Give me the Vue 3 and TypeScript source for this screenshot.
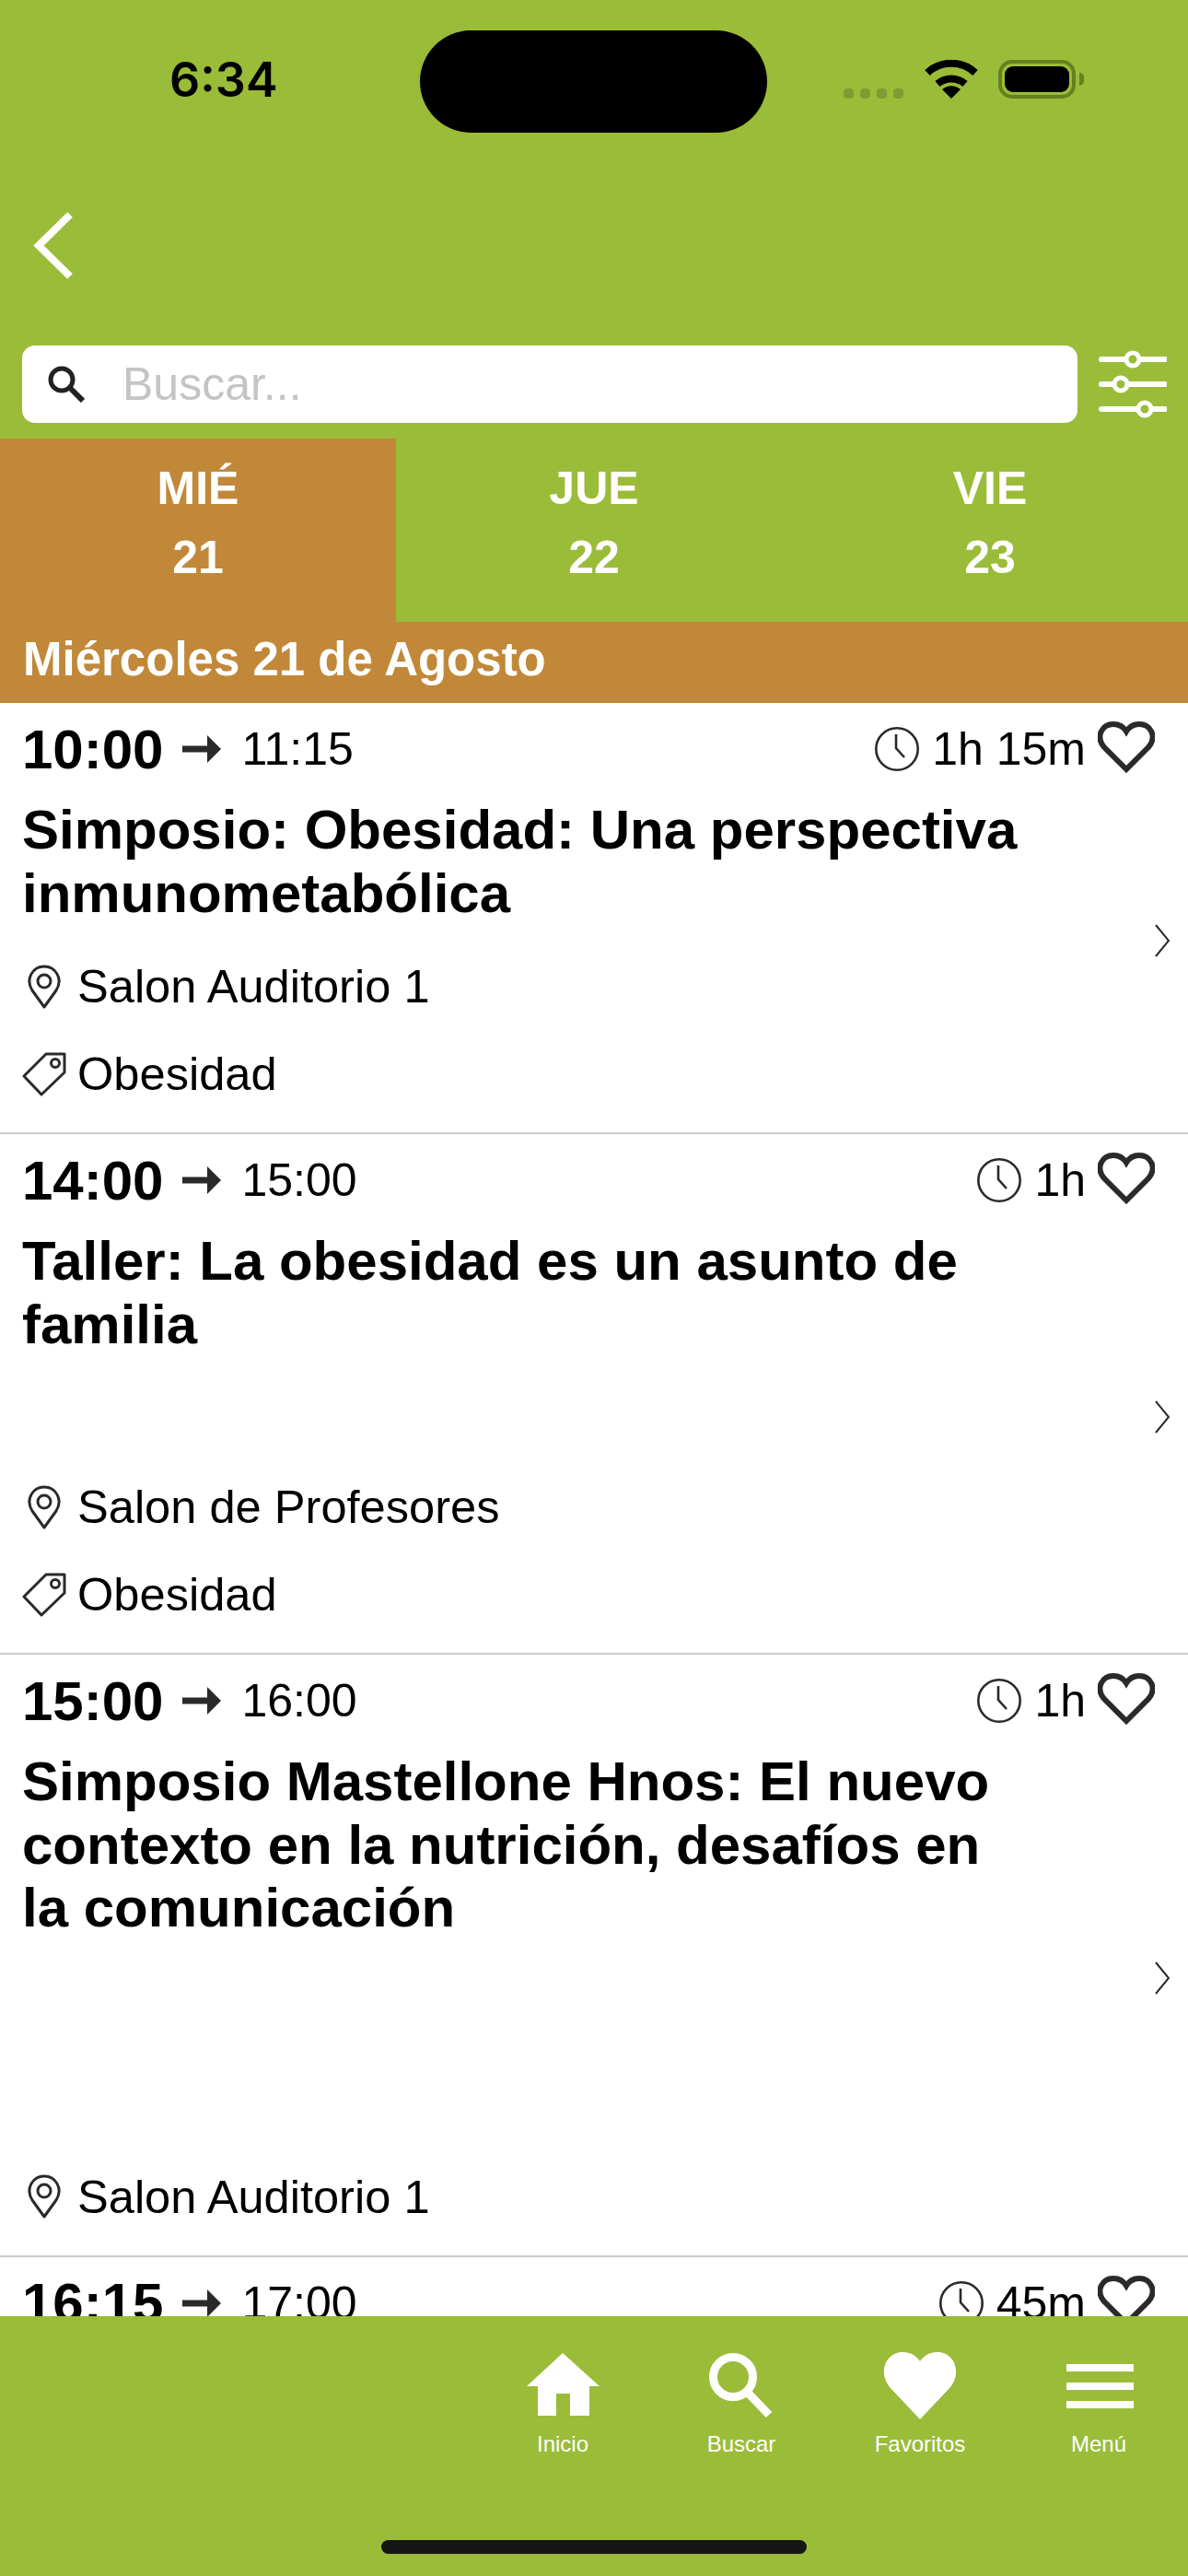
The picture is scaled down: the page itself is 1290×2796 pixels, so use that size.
<script setup lang="ts">
interface Session {
  start: string
  end: string
  duration: string
  title: string
  place: string
  tag?: string
  spacer: number
}

const days = [
  { name: 'MIÉ', num: '21', active: true },
  { name: 'JUE', num: '22', active: false },
  { name: 'VIE', num: '23', active: false },
]

const sessions: Session[] = [
  { start: '10:00', end: '11:15', duration: '1h 15m', title: 'Simposio: Obesidad: Una perspectiva inmunometabólica', place: 'Salon Auditorio 1', tag: 'Obesidad', spacer: 0 },
  { start: '14:00', end: '15:00', duration: '1h', title: 'Taller: La obesidad es un asunto de familia', place: 'Salon de Profesores', tag: 'Obesidad', spacer: 97 },
  { start: '15:00', end: '16:00', duration: '1h', title: 'Simposio Mastellone Hnos: El nuevo contexto en la nutrición, desafíos en la comunicación', place: 'Salon Auditorio 1', spacer: 212 },
  { start: '16:15', end: '17:00', duration: '45m', title: '', place: '', spacer: 0 },
]

const tabs = ['Inicio', 'Buscar', 'Favoritos', 'Menú']
</script>

<template>
  <div class="screen">
    <header class="top">
      <div class="status">
        <span class="clock-text">6:34</span>
        <div class="island"></div>
        <div class="status-icons">
          <div class="signal"><i></i><i></i><i></i><i></i></div>
          <svg class="wifi" width="60" height="42" viewBox="0 0 60 42">
            <path d="M30 42 L20 32 A15 15 0 0 1 40 32 Z" fill="#000" />
            <path d="M15 26 A23 23 0 0 1 45 26" fill="none" stroke="#000" stroke-width="8" />
            <path d="M4 14 A38 38 0 0 1 56 14" fill="none" stroke="#000" stroke-width="8" />
          </svg>
          <div class="battery"><div class="battery-fill"></div></div>
          <div class="battery-nub"></div>
        </div>
      </div>

      <svg class="back" width="43" height="73" viewBox="0 0 43 73">
        <path d="M40 3 L6 36.5 L40 70" fill="none" stroke="#fff" stroke-width="8" />
      </svg>

      <div class="search-row">
        <div class="search-box">
          <svg width="40" height="40" viewBox="0 0 40 40">
            <circle cx="15" cy="15" r="12" fill="none" stroke="#222" stroke-width="5" />
            <path d="M24 24 L38 38" stroke="#222" stroke-width="6" />
          </svg>
          <span class="placeholder">Buscar...</span>
        </div>
        <svg class="sliders" width="74" height="74" viewBox="0 0 74 74">
          <g stroke="#fff" stroke-width="6" stroke-linecap="round">
            <path d="M3 10 H72 M3 37 H72 M3 64 H72" />
          </g>
          <g fill="#9bbc38" stroke="#fff" stroke-width="5">
            <circle cx="37" cy="10" r="7" />
            <circle cx="24" cy="37" r="7" />
            <circle cx="50" cy="64" r="7" />
          </g>
        </svg>
      </div>
    </header>

    <nav class="days">
      <div v-for="d in days" :key="d.num" class="day" :class="{ 'day--active': d.active }">
        <span class="day-name">{{ d.name }}</span>
        <span class="day-num">{{ d.num }}</span>
      </div>
    </nav>
    <div class="date-bar">Miércoles 21 de Agosto</div>

    <main class="list">
      <article v-for="s in sessions" :key="s.start" class="row">
        <div class="row-head">
          <span class="start">{{ s.start }}</span>
          <svg class="arrow" width="42" height="30" viewBox="0 0 42 30">
            <path d="M0 15 H28" stroke="#2a2a2a" stroke-width="7" />
            <path d="M27 0 L42 15 L27 30 Z" fill="#2a2a2a" />
          </svg>
          <span class="end">{{ s.end }}</span>
          <svg class="clock" width="48" height="48" viewBox="0 0 48 48">
            <circle cx="24" cy="24" r="22.7" fill="none" stroke="#2a2a2a" stroke-width="2.6" />
            <path d="M23 8 V23 L32 33" fill="none" stroke="#2a2a2a" stroke-width="2.6" />
          </svg>
          <span class="duration">{{ s.duration }}</span>
          <svg class="heart" width="62" height="56" viewBox="0 0 62 56">
            <path d="M31 52 L7 28 C-3 16 5 3 17 3 C23 3 28 6 31 11 C34 6 39 3 45 3 C57 3 65 16 55 28 Z" fill="none" stroke="#2a2a2a" stroke-width="6" />
          </svg>
        </div>

        <template v-if="s.title">
          <h2 class="title">{{ s.title }}</h2>
          <div :style="{ height: s.spacer + 'px' }"></div>
          <div class="meta">
            <svg class="pin" width="36" height="48" viewBox="0 0 36 48">
              <path d="M18 46 L5 28 C-3 15 6 2 18 2 C30 2 39 15 31 28 Z" fill="none" stroke="#2a2a2a" stroke-width="3" stroke-linejoin="round" />
              <circle cx="18" cy="18" r="7" fill="none" stroke="#2a2a2a" stroke-width="3" />
            </svg>
            {{ s.place }}
          </div>
          <div v-if="s.tag" class="meta">
            <svg class="tag" width="48" height="48" viewBox="0 0 48 48">
              <path d="M2 26 L26 2 H46 V22 L21 46 Z" fill="none" stroke="#2a2a2a" stroke-width="3" stroke-linejoin="round" />
              <circle cx="36" cy="12" r="4.5" fill="none" stroke="#2a2a2a" stroke-width="3" />
            </svg>
            {{ s.tag }}
          </div>
          <svg class="chevron" width="18" height="36" viewBox="0 0 18 36">
            <path d="M2 1 L16 18 L2 35" fill="none" stroke="#2a2a2a" stroke-width="2" />
          </svg>
        </template>
      </article>
    </main>

    <footer class="bottom">
      <div class="tabs">
        <div v-for="t in tabs" :key="t" class="tab">
          <svg v-if="t === 'Inicio'" width="80" height="73" viewBox="0 0 80 73">
            <path d="M40 1 L80 37 H69 V69 H48 V45 H33 V69 H13 V37 H1 Z" fill="#fff" />
          </svg>
          <svg v-else-if="t === 'Buscar'" width="80" height="73" viewBox="0 0 80 73">
            <circle cx="31" cy="27" r="21.5" fill="none" stroke="#fff" stroke-width="9" />
            <path d="M47 44 L70 68" stroke="#fff" stroke-width="9" />
          </svg>
          <svg v-else-if="t === 'Favoritos'" width="80" height="73" viewBox="0 0 80 73">
            <path d="M40 73 L7 38 C-6 22 3 0 21 0 C30 0 36 4 40 10 C44 4 50 0 59 0 C77 0 86 22 73 38 Z" fill="#fff" />
          </svg>
          <svg v-else width="80" height="73" viewBox="0 0 80 73">
            <path d="M5 13 H78 V21 H5 Z M5 33 H78 V41 H5 Z M5 53 H78 V61 H5 Z" fill="#fff" />
          </svg>
          <span class="tab-label">{{ t }}</span>
        </div>
      </div>
      <div class="home-bar"></div>
    </footer>
  </div>
</template>

<style>
html,
body {
  margin: 0;
  background: #fff;
}
</style>

<style scoped>
.screen {
  width: 1290px;
  height: 2796px;
  display: flex;
  flex-direction: column;
  overflow: hidden;
  background: #fff;
  font-family: "Liberation Sans", Arial, sans-serif;
  color: #000;
}

.top {
  background: #9bbc38;
  height: 476px;
  flex-shrink: 0;
}

.status {
  height: 111px;
  padding: 33px 0 0 184px;
  display: flex;
}

.clock-text {
  width: 272px;
  font-family: Inter, sans-serif;
  font-size: 52px;
  font-weight: 600;
  line-height: 108px;
}

.island {
  width: 377px;
  height: 111px;
  border-radius: 56px;
  background: #000;
}

.status-icons {
  margin-left: 83px;
  height: 42px;
  padding-top: 32px;
  display: flex;
  align-items: flex-end;
}

.signal {
  display: flex;
  gap: 7px;
  margin-right: 22px;
}

.signal i {
  width: 11px;
  height: 11px;
  border-radius: 4px;
  background: #7f9c33;
}

.wifi {
  margin-right: 21px;
}

.battery {
  width: 84px;
  height: 42px;
  box-sizing: border-box;
  padding: 3px;
  border: 4px solid #64801f;
  border-radius: 15px;
}

.battery-fill {
  height: 100%;
  border-radius: 9px;
  background: #000;
}

.battery-nub {
  width: 5px;
  height: 14px;
  margin: 0 0 14px 4px;
  border-radius: 0 5px 5px 0;
  background: #64801f;
}

.back {
  display: block;
  margin: 86px 0 72px 36px;
}

.search-row {
  display: flex;
  align-items: center;
  padding-left: 24px;
}

.search-box {
  width: 1146px;
  height: 84px;
  box-sizing: border-box;
  padding-left: 28px;
  display: flex;
  align-items: center;
  border-radius: 14px;
  background: #fff;
}

.placeholder {
  margin-left: 41px;
  font-size: 50px;
  color: #c4c4c6;
}

.sliders {
  margin-left: 23px;
}

.days {
  display: grid;
  grid-template-columns: 430px 430px 430px;
  height: 199px;
  flex-shrink: 0;
  background: #9bbc38;
  color: #fff;
  font-weight: 700;
  font-size: 50px;
}

.day {
  display: flex;
  flex-direction: column;
  align-items: center;
  padding-top: 24px;
  gap: 15px;
}

.day--active {
  background: #c18839;
}

.day-name,
.day-num {
  line-height: 60px;
}

.date-bar {
  height: 88px;
  flex-shrink: 0;
  padding-left: 25px;
  background: #c18839;
  color: #fff;
  font-size: 51px;
  font-weight: 700;
  line-height: 82px;
}

.list {
  flex: 1;
  min-height: 0;
  overflow: hidden;
}

.row {
  position: relative;
  padding: 0 24px 16px;
  border-bottom: 2px solid #cbcbcb;
}

.row-head {
  display: flex;
  align-items: center;
  height: 100px;
  padding-right: 12px;
}

.start {
  font-size: 60px;
  font-weight: 700;
}

.arrow {
  margin: 0 22px 0 21px;
}

.end,
.duration {
  font-size: 50px;
}

.clock {
  margin-left: auto;
  margin-right: 14px;
}

.heart {
  margin: -4px 0 0 13px;
}

.title {
  width: 1100px;
  margin: 4px 0 19px;
  font-size: 60px;
  font-weight: 700;
  line-height: 68.5px;
}

.meta {
  display: flex;
  align-items: center;
  height: 95px;
  font-size: 50.6px;
}

.pin {
  margin: 0 18px 0 6px;
}

.tag {
  margin-right: 12px;
}

.chevron {
  position: absolute;
  top: calc(50% + 7px);
  right: 19px;
}

.bottom {
  height: 282px;
  flex-shrink: 0;
  background: #9bbc38;
  position: relative;
}

.tabs {
  display: flex;
  justify-content: flex-end;
  padding-top: 39px;
}

.tab {
  width: 194px;
  display: flex;
  flex-direction: column;
  align-items: center;
  color: #fff;
}

.tab-label {
  margin-top: 13px;
  font-size: 24px;
  line-height: 28px;
}

.home-bar {
  position: absolute;
  left: 414px;
  bottom: 24px;
  width: 462px;
  height: 15px;
  border-radius: 8px;
  background: #161616;
}
</style>
